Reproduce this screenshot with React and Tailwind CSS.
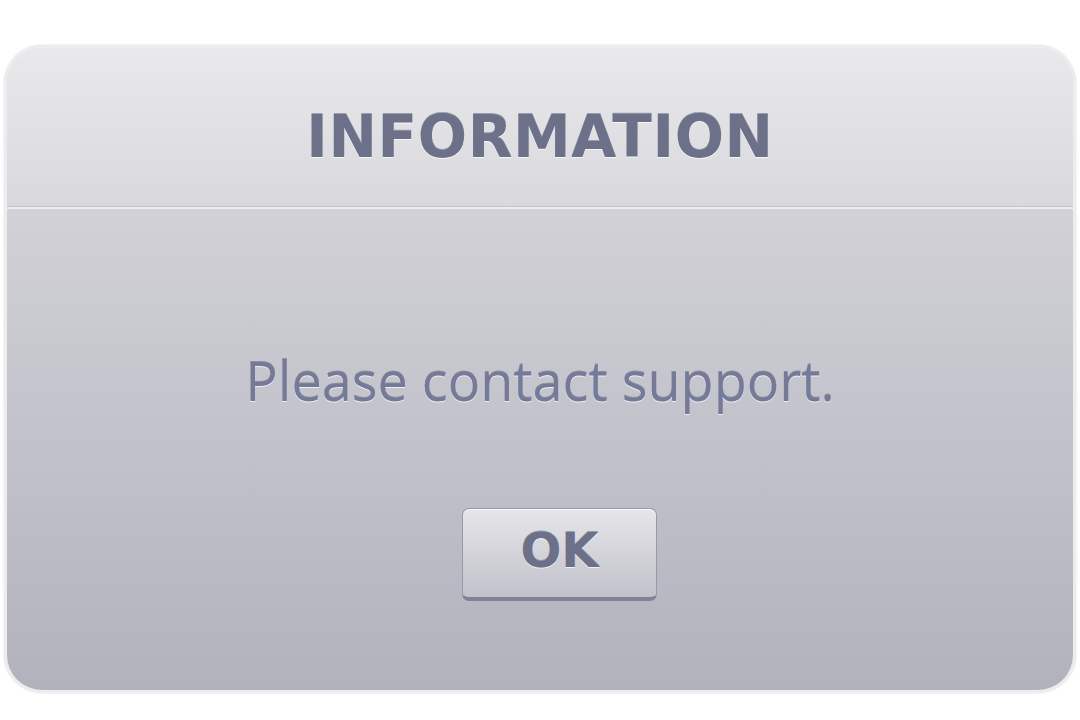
export default function App() {
  const emboss =
    '[text-shadow:0_1px_0_rgba(255,255,255,0.7),0_-1px_0_rgba(70,74,100,0.45)]';

  return (
    <div className="w-[1080px] h-[720px] bg-white pt-[45px] px-[4px] font-['Open_Sans','Liberation_Sans',sans-serif]">
      <div className="h-[648px] rounded-[38px] bg-[#ededf0] p-[3px] shadow-[0_0_2px_rgba(0,0,0,0.15)]">
        <div className="h-full rounded-[35px] overflow-hidden flex flex-col bg-gradient-to-b from-[#dcdce0] to-[#b1b2bc]">
          {/* Header */}
          <div className="h-[159px] shrink-0 flex justify-center pt-[60px] bg-gradient-to-b from-[#e9e9ec] to-[#d9d9dd] border-b border-[#c4c4ca]">
            <h1
              className={`font-['DejaVu_Sans',sans-serif] text-[58px] tracking-[0.6px] font-bold text-[#6c7189] leading-none ${emboss}`}
            >
              INFORMATION
            </h1>
          </div>
          <div className="h-[2px] bg-[#eeeef1]" />

          {/* Body */}
          <div className="flex-1 flex flex-col items-center">
            <p
              className={`mt-[144px] text-[54px] leading-none text-[#747a98] ${emboss}`}
            >
              Please contact support.
            </p>
            <button className="mt-[101px] ml-[39px] w-[195px] h-[93px] pb-[6px] rounded-[7px] border border-[#9699ac] border-b-[4px] border-b-[#7e8298] bg-gradient-to-b from-[#e6e6ea] to-[#c1c2ca] shadow-[inset_0_1px_0_rgba(255,255,255,0.8)] flex items-center justify-center">
              <span
                className={`font-['DejaVu_Sans',sans-serif] text-[48px] font-bold leading-none text-[#6c7189] ${emboss}`}
              >
                OK
              </span>
            </button>
          </div>
        </div>
      </div>
    </div>
  );
}
